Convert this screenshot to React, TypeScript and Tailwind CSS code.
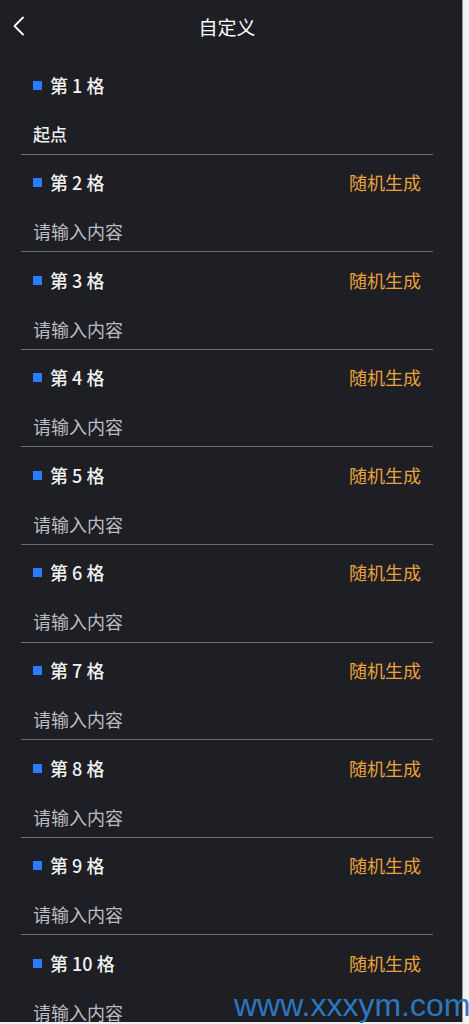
import React from "react";

const font = { fontFamily: '"Noto Sans CJK SC", "Noto Sans", sans-serif' };

export default function App() {
  const items = Array.from({ length: 10 }, (_, i) => i + 1);
  return (
    <div className="w-[469px] h-[1024px] bg-[#f2f2f2] overflow-hidden relative" style={font}>
      <div className="w-[463px] h-[1022px] bg-[#1e1e25] border-r border-[#9a9a9e] overflow-hidden">
        <div className="h-[57px] flex items-center relative">
          <div className="absolute left-[12px] top-[16px]">
            <svg width="14" height="20" viewBox="0 0 14 20" fill="none">
              <path d="M11 1.5 L2.5 10 L11 18.5" stroke="#ffffff" strokeWidth="1.8" strokeLinecap="round" strokeLinejoin="round" />
            </svg>
          </div>
          <div className="w-full pr-[8px] text-center text-[19px] text-white leading-none -mt-[4px]">自定义</div>
        </div>
        {items.map((n) => (
          <div key={n} className="ml-[21px] mr-[29px] border-b border-[#6d6d72] pt-[10px] pb-[6.6px]">
            <div className="h-[36px] flex items-center justify-between pl-[12px] pr-[12px]">
              <div className="flex items-center">
                <div className="w-[9px] h-[9px] bg-[#2a7bff] mr-[8px]" />
                <span className="text-[18px] text-[#f2f2f2] font-medium">第 {n} 格</span>
              </div>
              {n > 1 && <span className="text-[18px] text-[#eaa23a]">随机生成</span>}
            </div>
            <div className="h-[18px]" />
            <div className="h-[26px] flex items-center pl-[12px]">
              {n === 1 ? (
                <span className="text-[17px] text-[#f0f0f0] font-medium">起点</span>
              ) : (
                <span className="text-[18px] text-[#bcbcc0]">请输入内容</span>
              )}
            </div>
          </div>
        ))}
      </div>
      <div
        className="absolute left-[234px] top-[989px] text-[32px] text-[#2a78c2] leading-none whitespace-nowrap"
        style={{ fontFamily: '"Liberation Sans", Arial, sans-serif' }}
      >
        www.xxxym.com
      </div>
    </div>
  );
}
